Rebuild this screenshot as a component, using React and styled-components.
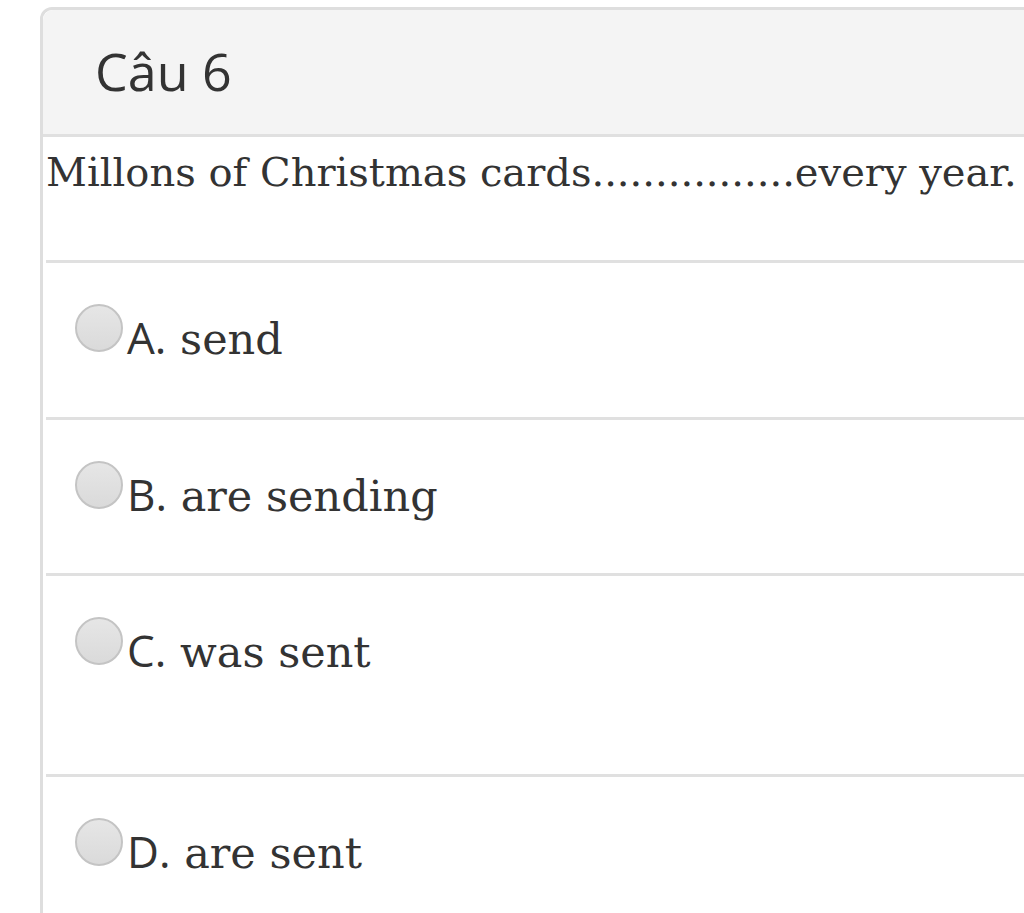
import styled, { createGlobalStyle } from 'styled-components'

const options = [
  { key: 'A', text: 'send' },
  { key: 'B', text: 'are sending' },
  { key: 'C', text: 'was sent', tall: true },
  { key: 'D', text: 'are sent' },
]

export default function App() {
  return (
    <>
      <GlobalStyle />
      <Card>
        <Header>
          <Title>Câu 6</Title>
        </Header>

        <Body>
          <Question>Millons of Christmas cards................every year.</Question>

          <OptionList>
            {options.map((opt) => (
              <Option key={opt.key} $tall={opt.tall}>
                <Radio type="radio" name="cau6" />
                <OptionLabel>
                  <Letter>{opt.key}.</Letter> {opt.text}
                </OptionLabel>
              </Option>
            ))}
          </OptionList>
        </Body>
      </Card>
    </>
  )
}

const GlobalStyle = createGlobalStyle`
  html, body {
    margin: 0;
    background: #fff;
    overflow: hidden;
  }

  body {
    font-family: 'DejaVu Serif', serif;
    color: #333;
  }
`

const Card = styled.div`
  margin: 7px 0 0 40px;
  width: 1120px;
  min-height: 960px;
  border: 3px solid #dedede;
  border-radius: 12px;
  background: #fff;
`

const Header = styled.div`
  height: 124px;
  padding: 0 0 4px 52px;
  box-sizing: border-box;
  display: flex;
  align-items: center;
  background: #f4f4f4;
  border-bottom: 3px solid #e0e0e0;
  border-radius: 10px 10px 0 0;
  box-sizing: content-box;
  height: 120px;
`

const Title = styled.h2`
  margin: 0;
  font-family: 'Open Sans', sans-serif;
  font-weight: 400;
  font-size: 52px;
  color: #333;
`

const Body = styled.div`
  padding: 0 0 0 3px;
`

const Question = styled.p`
  margin: 0;
  height: 123px;
  padding-top: 11px;
  box-sizing: border-box;
  font-size: 40px;
  line-height: 48px;
  color: #333;
`

const OptionList = styled.div`
  display: flex;
  flex-direction: column;
`

const Option = styled.label`
  display: flex;
  align-items: flex-start;
  height: ${(p) => (p.$tall ? '201px' : '156.5px')};
  padding: 41px 0 0 29px;
  box-sizing: border-box;
  border-top: 3px solid #e0e0e0;
`

const Radio = styled.input`
  appearance: none;
  margin: 0 4px 0 0;
  width: 48px;
  height: 48px;
  flex: none;
  border-radius: 50%;
  border: 2px solid #c4c4c4;
  background: linear-gradient(#e6e6e6, #dadada);
  box-sizing: border-box;
`

const OptionLabel = styled.span`
  font-size: 43px;
  line-height: 48px;
  padding-top: 9px;
  color: #333;
`

const Letter = styled.span`
  font-family: 'Open Sans', sans-serif;
  font-size: 44px;
`
